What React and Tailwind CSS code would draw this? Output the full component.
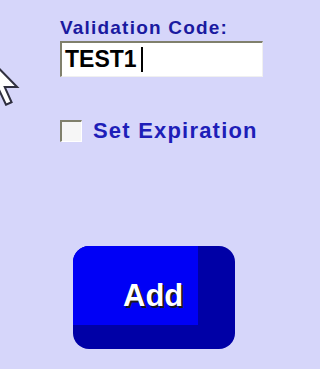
import React from "react";

function Pointer() {
  return (
    <svg
      className="absolute left-[-12px] top-[58px]"
      width="32"
      height="48"
      viewBox="0 0 12 19"
    >
      <path
        d="M0.5 0.5 L0.5 16 L4 12.5 L6.8 18.5 L9 17.5 L6.3 11.5 L11.2 11.5 Z"
        fill="#ffffff"
        stroke="#303040"
        strokeWidth="0.8"
        strokeLinejoin="miter"
      />
    </svg>
  );
}

function App() {
  return (
    <div className="relative w-full h-[369px] overflow-hidden bg-[#d6d6fa] font-['Liberation_Sans',sans-serif]">
      <Pointer />
      <div className="flex flex-col pl-[60px] pt-[17px]">
        <label className="text-[19px] leading-[22px] font-bold tracking-[1.2px] text-[#1a1aa0]">
          Validation Code:
        </label>
        <div className="mt-[2px] w-[203px] h-[36px] flex items-center bg-white border-t-2 border-l-2 border-[#80806c] border-r border-b border-r-[#f0f0f0] border-b-[#f0f0f0] pl-[3px]">
          <span className="font-bold text-[23px] leading-none text-black">
            TEST1
          </span>
          <span className="ml-[4px] w-[2px] h-[25px] bg-black" />
        </div>
        <div className="mt-[42px] flex items-center">
          <div className="w-[22px] h-[22px] bg-[#f6f6f6] border-t-2 border-l-2 border-[#80806c] border-r border-b border-r-white border-b-white" />
          <span className="ml-[11px] text-[22px] leading-[24px] font-bold tracking-[1.2px] text-[#1e1eb8]">
            Set Expiration
          </span>
        </div>
        <button className="mt-[103px] ml-[13px] w-[162px] h-[103px] rounded-[16px] overflow-hidden bg-[#0000a6] flex flex-col items-start">
          <div className="w-[125px] h-[79px] bg-[#0000f6] pl-[50px] pt-[34px] text-left">
            <span className="font-bold text-[31px] leading-[31px] text-white [text-shadow:2px_2px_0_#1a1a1a]">
              Add
            </span>
          </div>
        </button>
      </div>
    </div>
  );
}

export default App;
